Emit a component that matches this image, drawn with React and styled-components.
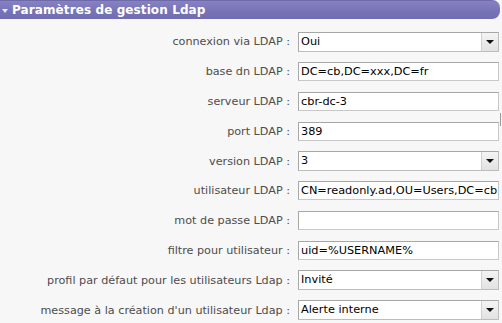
import React from "react";
import styled, { createGlobalStyle } from "styled-components";

const GlobalStyle = createGlobalStyle`
  html, body { margin: 0; padding: 0; background: #f7f7f7; }
  body { font-family: "DejaVu Sans", Verdana, sans-serif; }
`;

const Panel = styled.div`
  width: 502px;
  height: 323px;
  overflow: hidden;
  background: #f7f7f7;
  position: relative;
`;

const Header = styled.div`
  width: 500px;
  height: 19px;
  box-sizing: border-box;
  display: flex;
  align-items: center;
  gap: 4px;
  padding-left: 2px;
  background: linear-gradient(#8682c3, #7672b6 60%, #716db2);
  border-top: 1px solid #6f6bab;
  border-radius: 0 8px 8px 0;
  color: #fff;
`;

const Arrow = styled.span`
  width: 0;
  height: 0;
  border-left: 3px solid transparent;
  border-right: 3px solid transparent;
  border-top: 4px solid #e8e6f6;
  margin-top: 1px;
`;

const Title = styled.span`
  font-family: "DejaVu Sans", Verdana, sans-serif;
  font-weight: bold;
  font-size: 12px;
  letter-spacing: 0.1px;
  line-height: 19px;
`;

const Form = styled.div`
  display: grid;
  grid-template-columns: 290px 201px;
  column-gap: 8px;
  grid-auto-rows: 29.8px;
  padding-top: 8px;
  align-items: center;
`;

const Label = styled.div`
  text-align: right;
  font-size: 11.2px;
  color: #4d4d4d;
  white-space: nowrap;
`;

const TextInput = styled.div`
  height: 19px;
  box-sizing: border-box;
  border: 1px solid #a7a7a7;
  border-right-color: #c8c8c8;
  border-bottom-color: #c8c8c8;
  background: #fff;
  font-size: 11.3px;
  line-height: 17px;
  padding-left: 2px;
  color: #000;
  white-space: nowrap;
  overflow: hidden;
`;

const Select = styled.div`
  height: 20px;
  box-sizing: border-box;
  border: 1px solid #a7a7a7;
  border-right-color: #bdbdbd;
  border-bottom-color: #bdbdbd;
  background: #fff;
  display: flex;
  font-size: 11.3px;
  color: #000;
`;

const SelectValue = styled.span`
  flex: 1;
  padding-left: 2px;
  line-height: 18px;
  white-space: nowrap;
  overflow: hidden;
`;

const DropButton = styled.span`
  width: 16px;
  border-left: 1px solid #d0d0d0;
  background: linear-gradient(#f4f4f4, #e2e2e2);
  display: flex;
  align-items: center;
  justify-content: center;
  &::after {
    content: "";
    border-left: 4px solid transparent;
    border-right: 4px solid transparent;
    border-top: 4px solid #111;
  }
`;

const EdgeMark = styled.span`
  position: absolute;
  left: 500px;
  top: 113px;
  width: 1px;
  height: 13px;
  background: #9a9a9a;
`;

const rows = [
  { label: "connexion via LDAP :", type: "select", value: "Oui" },
  { label: "base dn LDAP :", type: "text", value: "DC=cb,DC=xxx,DC=fr" },
  { label: "serveur LDAP :", type: "text", value: "cbr-dc-3" },
  { label: "port LDAP :", type: "text", value: "389" },
  { label: "version LDAP :", type: "select", value: "3" },
  { label: "utilisateur LDAP :", type: "text", value: "CN=readonly.ad,OU=Users,DC=cb" },
  { label: "mot de passe LDAP :", type: "text", value: "" },
  { label: "filtre pour utilisateur :", type: "text", value: "uid=%USERNAME%" },
  { label: "profil par défaut pour les utilisateurs Ldap :", type: "select", value: "Invité" },
  { label: "message à la création d'un utilisateur Ldap :", type: "select", value: "Alerte interne" },
];

export default function App() {
  return (
    <>
      <GlobalStyle />
      <Panel>
        <Header>
          <Arrow />
          <Title>Paramètres de gestion Ldap</Title>
        </Header>
        <Form>
          {rows.map((r) => (
            <React.Fragment key={r.label}>
              <Label>{r.label}</Label>
              {r.type === "select" ? (
                <Select>
                  <SelectValue>{r.value}</SelectValue>
                  <DropButton />
                </Select>
              ) : (
                <TextInput>{r.value}</TextInput>
              )}
            </React.Fragment>
          ))}
        </Form>
        <EdgeMark />
      </Panel>
    </>
  );
}
